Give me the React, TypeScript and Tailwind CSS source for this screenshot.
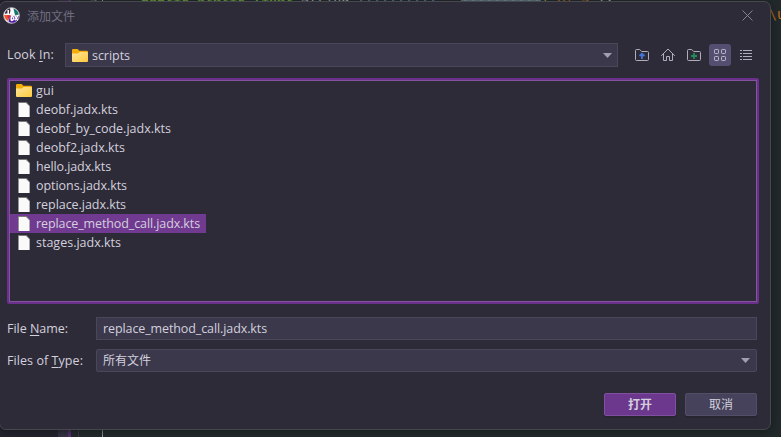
import React from "react";

const files = [
  { name: "gui", w: 18, folder: true },
  { name: "deobf.jadx.kts", w: 82 },
  { name: "deobf_by_code.jadx.kts", w: 135 },
  { name: "deobf2.jadx.kts", w: 89 },
  { name: "hello.jadx.kts", w: 75 },
  { name: "options.jadx.kts", w: 91 },
  { name: "replace.jadx.kts", w: 90 },
  { name: "replace_method_call.jadx.kts", w: 164, selected: true },
  { name: "stages.jadx.kts", w: 85 },
];

function Folder() {
  return (
    <svg width="16" height="13" viewBox="0 0 16 13" className="shrink-0">
      <defs>
        <linearGradient id="folder" x1="0" y1="0" x2="1" y2="1">
          <stop offset="0" stopColor="#ffe69a" />
          <stop offset="1" stopColor="#ffca3e" />
        </linearGradient>
      </defs>
      <path d="M0 1.2Q0 0 1.2 0H5.6L7.4 1.8H14.8Q16 1.8 16 3V8H0Z" fill="#f5ad0a" />
      <path d="M0 4.4H6L7.6 3H15Q16 3 16 4V12Q16 13 15 13H1Q0 13 0 12Z" fill="url(#folder)" />
    </svg>
  );
}

function Sheet() {
  return (
    <svg width="12" height="15" viewBox="0 0 12 15" className="mx-0.5 shrink-0">
      <path d="M0 0H8.6L12 3.8V15H0Z" fill="#7d7b7a" />
      <path d="M.8 1H8L11.4 4.2V15H.8Z" fill="#fafafa" />
    </svg>
  );
}

function Arrow() {
  return (
    <svg width="9" height="5" viewBox="0 0 9 5" className="shrink-0">
      <path d="M0 0H9L4.5 5Z" fill="#a19eb0" />
    </svg>
  );
}

function Logo() {
  return (
    <svg width="17" height="17" viewBox="0 0 17 17">
      <circle cx="8.5" cy="8.5" r="7.8" fill="#f1edf0" stroke="#d4d1d6" strokeWidth=".8" />
      <path d="M2.2 5.5Q3.5 2 7 1.2L8 7H2.2Z" fill="#3a2c3c" />
      <path d="M10.5 1.5Q15 3 15.8 7.5L12 8.5Z" fill="#14786d" />
      <path d="M1.2 8H7.5L5.2 14Q1.5 12 1.2 8Z" fill="#ee5a2c" />
      <path d="M7 9H15.8Q15.5 13 12 15.2Q8 16.6 5.5 14.6Z" fill="#4f1fa6" />
      <path d="M4 8.5L8 8.2L5.6 12Z" fill="#d62648" />
      <g fill="none" stroke="#fff" strokeWidth="1.5">
        <path d="M5.2 3V7.3H2.8M6.9 8L9 2.8L11.1 8M7.6 6.4H10.4" />
        <path d="M8.2 9.4V13.6M8.2 9.4Q11 9.5 10.6 11.7Q10 13.6 8.2 13.6M11.8 8.9L14.8 13.2M14.8 8.9L11.8 13.2" />
      </g>
    </svg>
  );
}

function FolderOutline({ children }: { children: React.ReactNode }) {
  return (
    <svg width="16" height="16" viewBox="0 0 16 16" fill="none" stroke="#b0adbe">
      <path d="M1.5 3.5Q1.5 2.5 2.5 2.5H5.7L7.7 4.5H13.5Q14.5 4.5 14.5 5.5V12.5Q14.5 13.5 13.5 13.5H2.5Q1.5 13.5 1.5 12.5Z" />
      {children}
    </svg>
  );
}

const tool = "flex size-[22px] items-center justify-center rounded-[3px]";

export default function App() {
  return (
    <div className="relative h-[437px] w-[781px] overflow-hidden bg-[#232a2c] font-['Open_Sans','Noto_Sans_CJK_SC',sans-serif] text-[12.5px] text-[#d3d0dd]">
      <div className="absolute inset-0 flex">
        <div className="w-[58px] bg-[#252330]" />
        <div className="w-[10px] bg-[#3b374b]" />
        <div className="w-[3px] bg-[#6a3488]" />
        <div className="w-[7px] bg-[#252a2e]" />
        <div className="w-px bg-[#44434f]" />
        <div className="w-[23px]" />
        <div className="w-px bg-[#b8b8b8]" />
      </div>
      <div className="absolute -top-[11px] left-[90px] font-['DejaVu_Sans_Mono',monospace] text-[13.2px] leading-[18px] text-[#85878c]">5</div>
      <div className="absolute -top-[11px] left-[141px] font-['DejaVu_Sans_Mono',monospace] text-[13.3px] leading-[18px] whitespace-pre">
        <span className="font-bold text-[#7cb93c]">public static final </span>
        <span className="text-[#c9cbd3]">String </span>
        <span className="text-[#7299cc]">llllllllll</span>
        <span>{" = "}</span>
        <span className="bg-[#6a8790] text-[#8faeb8]">llllllllll</span>
        <span className="text-[#d9b650]">(</span>
        <span className="text-[#d77818]">{'"R( S"'}</span>
        <span>);</span>
      </div>
      <div className="absolute top-[6px] left-[769px] font-['DejaVu_Sans_Mono',monospace] text-[13.2px] leading-[18px] text-[#d77818]">\u</div>

      <main className="absolute top-px -left-px flex h-[429px] w-[772px] flex-col rounded-[7px] border border-[#47484e] bg-[#2d2b38] shadow-[0_2px_12px_#151a1c]">
        <header className="flex h-[41px] items-start pr-[17px] pl-[3px]">
          <div className="mt-[5px]"><Logo /></div>
          <span className="mt-[6px] ml-[7px] text-[12px] leading-[18px] text-[#716e80]">添加文件</span>
          <svg width="11" height="11" viewBox="0 0 11 11" className="mt-[8px] ml-auto" stroke="#858293">
            <path d="M.5 .5L10.5 10.5M10.5 .5L.5 10.5" />
          </svg>
        </header>

        <section className="flex h-[24px] items-center pr-[13px] pl-[7px]">
          <label className="w-[58px] pt-px"><Label parts={["Look ", "I", "n:"]} w={47} /></label>
          <div className="flex h-full w-[553px] items-center border border-[#4a475b] bg-[#3b384c] pr-[5px] pl-[6px]">
            <Folder />
            <Fit w={38} className="mt-px ml-[4px]">scripts</Fit>
            <div className="ml-auto"><Arrow /></div>
          </div>
          <nav className="ml-[13px] flex gap-1">
            <div className={tool}>
              <FolderOutline>
                <path d="M8 12V7M5.5 9L8 6.7L10.5 9" stroke="#4274d8" strokeWidth="1.8" />
              </FolderOutline>
            </div>
            <div className={tool}>
              <svg width="16" height="16" viewBox="0 0 16 16" fill="none" stroke="#b0adbe">
                <path d="M1.2 8.8L8 2L14.8 8.8M3.5 7V13.5H6.5V9.5H9.5V13.5H12.5V7" />
              </svg>
            </div>
            <div className={tool}>
              <FolderOutline>
                <path d="M8 6V12M5 9H11" stroke="#208b57" strokeWidth="1.8" />
              </FolderOutline>
            </div>
            <div className={`${tool} bg-[#544f70]`}>
              <svg width="16" height="16" viewBox="0 0 16 16" fill="none" stroke="#b9b6c7">
                <rect x="2.5" y="2.5" width="4" height="4" rx=".7" />
                <rect x="9.5" y="2.5" width="4" height="4" rx=".7" />
                <rect x="2.5" y="9.5" width="4" height="4" rx=".7" />
                <rect x="9.5" y="9.5" width="4" height="4" rx=".7" />
              </svg>
            </div>
            <div className={tool}>
              <svg width="16" height="16" viewBox="0 0 16 16" stroke="#b0adbe">
                <path d="M2 3.5H4M2 6.5H4M2 9.5H4M2 12.5H4M5 3.5H14M5 6.5H14M5 9.5H14M5 12.5H14" />
              </svg>
            </div>
          </nav>
        </section>

        <section className="mt-[11px] ml-[7px] h-[226px] w-[752px] rounded-[2px] border-2 border-[#6a308b]">
          <div className="h-full border border-[#8552a0]">
            {files.map((f) => (
              <div key={f.name} className={`flex h-[19px] w-fit items-center pr-[6px] pl-[6px] ${f.selected ? "bg-[#713a91]" : ""}`}>
                {f.folder ? <Folder /> : <Sheet />}
                <Fit w={f.w} className="mt-px ml-[4px]">{f.name}</Fit>
              </div>
            ))}
          </div>
        </section>

        <section className="mt-[13px] flex h-[23px] items-center pl-[7px]">
          <label className="w-[89px] pt-[2px]"><Label parts={["File ", "N", "ame:"]} w={61} /></label>
          <div className="flex h-full w-[661px] items-center border border-[#4a475b] bg-[#3b384c] pl-[6px]">
            <Fit w={164}>replace_method_call.jadx.kts</Fit>
          </div>
        </section>
        <section className="mt-[9px] flex h-[23px] items-center pl-[7px]">
          <label className="w-[89px] pt-[2px]"><Label parts={["Files of ", "T", "ype:"]} w={76} /></label>
          <div className="flex h-full w-[661px] items-center rounded-[2px] border border-[#4a475b] bg-[#3b384c] pr-[6px] pl-[6px]">
            <span className="mt-px text-[12px]">所有文件</span>
            <div className="ml-auto"><Arrow /></div>
          </div>
        </section>

        <footer className="mt-[21px] flex justify-end gap-[9px] pr-[13px]">
          <button className="h-[23px] w-[72px] rounded-[2px] border border-[#8050a0] bg-[#6b388e] text-[12px] leading-[21px] font-bold shadow-[0_2px_0_#272530]">打开</button>
          <button className="h-[23px] w-[72px] rounded-[2px] border border-[#524e68] bg-[#46425c] text-[12px] leading-[21px] shadow-[0_2px_0_#272530]">取消</button>
        </footer>
      </main>
    </div>
  );
}

/* Text tracked so that its run fills the given width. */
function Fit({ w, className = "", children }: { w: number; className?: string; children: React.ReactNode }) {
  const ref = React.useRef<HTMLSpanElement>(null);
  React.useLayoutEffect(() => {
    const el = ref.current!;
    const count = el.textContent!.length;
    el.style.letterSpacing = "0px";
    el.style.width = "auto";
    const natural = el.getBoundingClientRect().width;
    el.style.letterSpacing = `${(w - natural) / count}px`;
    el.style.width = `${w}px`;
  }, [w]);
  return <span ref={ref} className={`inline-block leading-[18px] whitespace-pre ${className}`}>{children}</span>;
}

function Label({ parts, w }: { parts: string[]; w: number }) {
  return (
    <Fit w={w}>
      {parts[0]}
      <span className="underline decoration-1 underline-offset-2">{parts[1]}</span>
      {parts[2]}
    </Fit>
  );
}
